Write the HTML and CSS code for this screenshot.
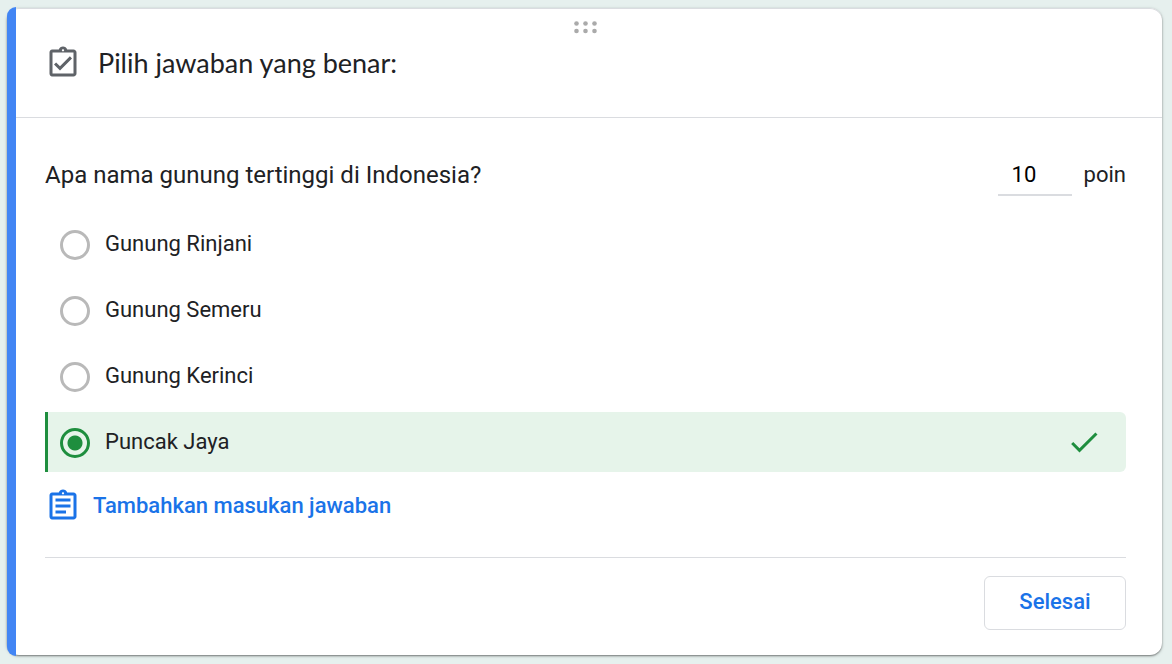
FILE: index.html
```html
<!DOCTYPE html>
<html lang="id">
<head>
<meta charset="utf-8">
<meta name="viewport" content="width=device-width, initial-scale=1">
<title>Pilih jawaban yang benar</title>
<link rel="stylesheet" href="styles.css">
</head>
<body>
<form class="card">
  <header class="card-header">
    <svg class="drag" viewBox="0 0 24 13" aria-hidden="true"><circle cx="2.5" cy="2.5" r="2.3"/><circle cx="11.5" cy="2.5" r="2.3"/><circle cx="20.5" cy="2.5" r="2.3"/><circle cx="2.5" cy="10" r="2.3"/><circle cx="11.5" cy="10" r="2.3"/><circle cx="20.5" cy="10" r="2.3"/></svg>
    <div class="title-row">
      <svg class="icon" viewBox="0 0 24 24" aria-hidden="true"><path d="M18 9l-1.41-1.42L10 14.17l-2.59-2.58L6 13l4 4zm1-6h-4.18C14.4 1.84 13.3 1 12 1c-1.3 0-2.4.84-2.82 2H5c-.14 0-.27.01-.4.04a2.008 2.008 0 0 0-1.44 1.19c-.1.23-.16.49-.16.77v14c0 .27.06.54.16.78s.25.45.43.64c.27.27.62.47 1.01.55.13.02.26.03.4.03h14c1.1 0 2-.9 2-2V5c0-1.1-.9-2-2-2zm-7-.25c.41 0 .75.34.75.75s-.34.75-.75.75-.75-.34-.75-.75.34-.75.75-.75zM19 19H5V5h14v14z"/></svg>
      <h1 class="title">Pilih jawaban yang benar:</h1>
    </div>
  </header>
  <main class="card-body">
    <div class="question-row">
      <h2 class="question" id="question">Apa nama gunung tertinggi di Indonesia?</h2>
      <div class="points">
        <input class="points-input" id="points" type="text" inputmode="numeric" value="10">
        <label for="points">poin</label>
      </div>
    </div>
    <div class="options" role="radiogroup" aria-labelledby="question">
      <label class="option"><input class="radio" type="radio" name="answer"><span class="option-text">Gunung Rinjani</span></label>
      <label class="option"><input class="radio" type="radio" name="answer"><span class="option-text">Gunung Semeru</span></label>
      <label class="option"><input class="radio" type="radio" name="answer"><span class="option-text">Gunung Kerinci</span></label>
      <label class="option correct"><input class="radio" type="radio" name="answer" checked><span class="option-text">Puncak Jaya</span><svg class="icon check" viewBox="0 0 24 24" aria-hidden="true"><path d="M9 16.17L4.83 12l-1.42 1.41L9 19 21 7l-1.41-1.41z"/></svg></label>
    </div>
    <button class="feedback" type="button">
      <svg class="icon" viewBox="0 0 24 24" aria-hidden="true"><path d="M7 15h7v2H7zm0-4h10v2H7zm0-4h10v2H7zm12-4h-4.18C14.4 1.84 13.3 1 12 1c-1.3 0-2.4.84-2.82 2H5c-.14 0-.27.01-.4.04a2.008 2.008 0 0 0-1.44 1.19c-.1.23-.16.49-.16.77v14c0 .27.06.54.16.78s.25.45.43.64c.27.27.62.47 1.01.55.13.02.26.03.4.03h14c1.1 0 2-.9 2-2V5c0-1.1-.9-2-2-2zm-7-.25c.41 0 .75.34.75.75s-.34.75-.75.75-.75-.34-.75-.75.34-.75.75-.75zM19 19H5V5h14v14z"/></svg>
      <span>Tambahkan masukan jawaban</span>
    </button>
    <footer class="actions"><button class="done" type="button">Selesai</button></footer>
  </main>
</form>
</body>
</html>
```
FILE: styles.css
```css
* { box-sizing: border-box; }
body {
  margin: 0;
  padding: 8px 10px 8px 7px;
  background: #e6f0ee;
  color: #202124;
  font: 22px/32px Roboto, sans-serif;
}
button, input { font: inherit; }
.card {
  position: relative;
  padding-left: 9px;
  background: #fff;
  border-radius: 12px;
  box-shadow: inset 0 1px 0 #dadce0, 0 1px 2px rgba(0, 0, 0, .45), 0 1px 4px rgba(0, 0, 0, .12);
}
.card::before {
  content: "";
  position: absolute;
  inset: -1px auto -1px 0;
  width: 9px;
  border-radius: 9px 0 0 9px;
  background: #4285f4;
}
.card-header {
  display: flex;
  flex-direction: column;
  padding: 13px 29px 36px;
  border-bottom: 1px solid #dadce0;
}
.drag { align-self: center; width: 24px; height: 13px; margin-right: 6px; fill: #aaa; }
.title-row { display: flex; align-items: center; gap: 17px; margin-top: 11px; }
.icon { flex: none; width: 36px; height: 36px; fill: #5f6368; }
.title { margin: 0; font: 400 27px/36px Lato, sans-serif; }
.card-body { padding: 36px 36px 25px 29px; }
.question-row { display: flex; align-items: flex-start; justify-content: space-between; gap: 24px; }
.question { margin: 0; padding-top: 5px; font-size: 24px; font-weight: 400; line-height: 32px; }
.points { display: flex; align-items: center; gap: 12px; }
.points-input {
  width: 74px;
  height: 42px;
  padding: 0 14px;
  border: 0;
  border-bottom: 2px solid #dadce0;
  background: none;
  color: #000;
}
.options { display: flex; flex-direction: column; gap: 6px; margin-top: 18px; }
.option { display: flex; align-items: center; height: 60px; padding: 0 24px 0 15px; }
.radio {
  appearance: none;
  flex: none;
  width: 30px;
  height: 30px;
  margin: 2px 15px 0 0;
  border: 3px solid #b9b9b9;
  border-radius: 50%;
}
.radio:checked {
  border-color: #1e8e3e;
  background: radial-gradient(circle, #1e8e3e 7px, transparent 8px);
}
.option-text { flex: 1; }
.correct {
  padding-left: 12px;
  border-left: 3px solid #1e8e3e;
  border-radius: 0 6px 6px 0;
  background: #e6f4ea;
}
.check { fill: #1e8e3e; }
.feedback {
  display: flex;
  align-items: center;
  gap: 12px;
  margin: 16px 0 33px;
  padding: 0;
  border: 0;
  background: none;
  color: #1a73e8;
  font-weight: 500;
}
.feedback .icon { fill: #1a73e8; }
.actions {
  display: flex;
  justify-content: flex-end;
  padding-top: 18px;
  border-top: 1px solid #dadce0;
}
.done {
  width: 142px;
  height: 54px;
  padding: 0 0 2px;
  border: 1px solid #dadce0;
  border-radius: 6px;
  background: #fff;
  color: #1a73e8;
  font-weight: 500;
}
```
